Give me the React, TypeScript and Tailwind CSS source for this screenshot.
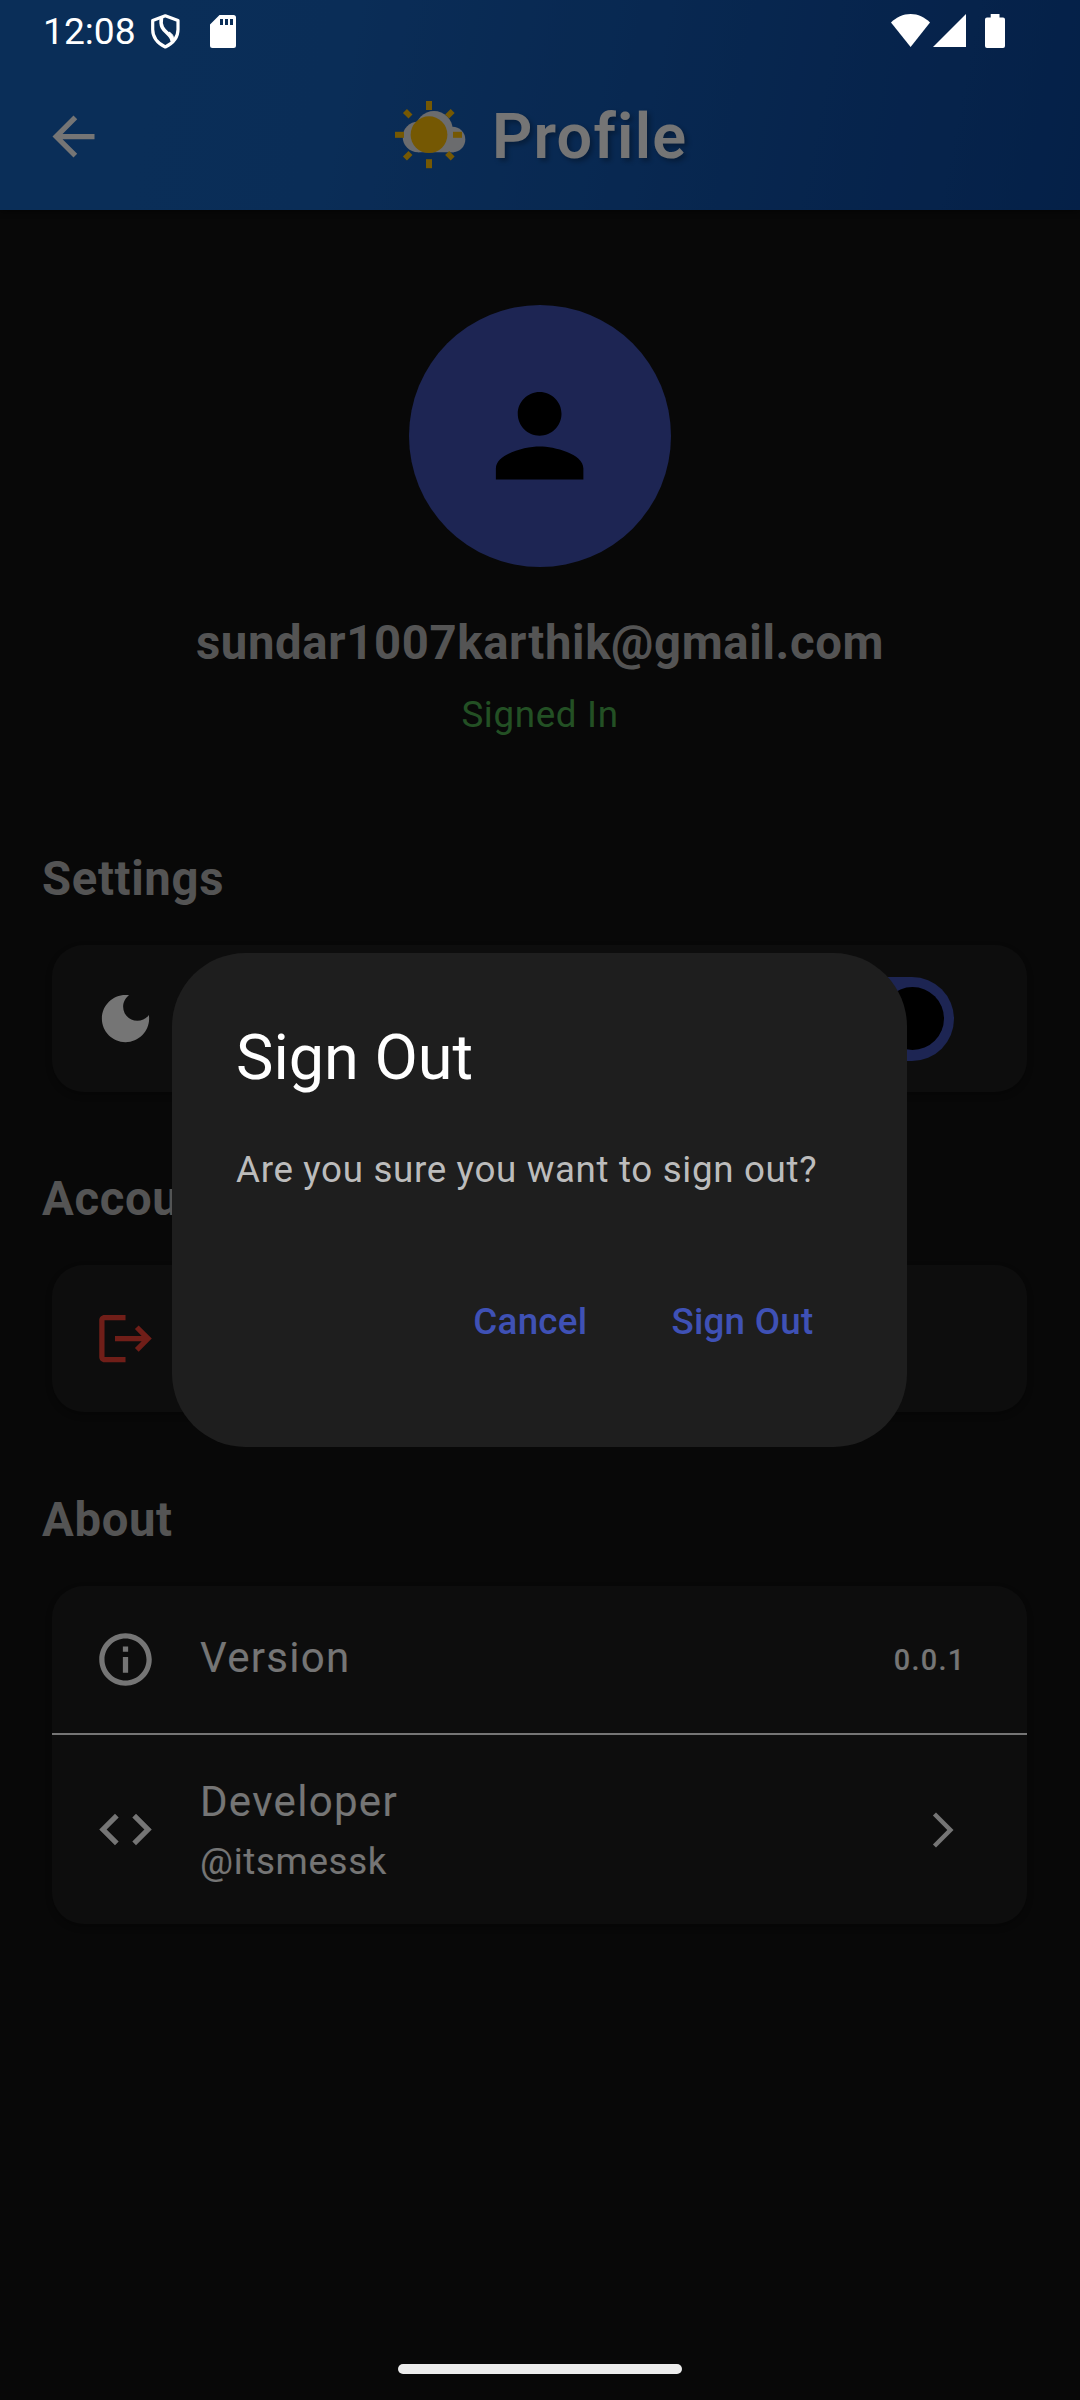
import type { ReactNode } from 'react'

const paths = {
  back: 'M20 11H7.83l5.59-5.59L12 4l-8 8 8 8 1.41-1.41L7.83 13H20v-2z',
  person: 'M12 12c2.21 0 4-1.79 4-4s-1.79-4-4-4-4 1.79-4 4 1.79 4 4 4zm0 2c-2.67 0-8 1.34-8 4v2h16v-2c0-2.66-5.33-4-8-4z',
  moon: 'M12 3c-4.97 0-9 4.03-9 9s4.03 9 9 9 9-4.03 9-9c0-.46-.04-.92-.1-1.36-.98 1.37-2.58 2.26-4.4 2.26-2.98 0-5.4-2.42-5.4-5.4 0-1.81.89-3.42 2.26-4.4-.44-.06-.9-.1-1.36-.1z',
  logout: 'M17 7l-1.41 1.41L18.17 11H8v2h10.17l-2.58 2.58L17 17l5-5zM4 5h8V3H4c-1.1 0-2 .9-2 2v14c0 1.1.9 2 2 2h8v-2H4V5z',
  info: 'M11 7h2v2h-2zm0 4h2v6h-2zm1-9C6.48 2 2 6.48 2 12s4.48 10 10 10 10-4.48 10-10S17.52 2 12 2zm0 18c-4.41 0-8-3.59-8-8s3.59-8 8-8 8 3.59 8 8-3.59 8-8 8z',
  code: 'M9.4 16.6 4.8 12l4.6-4.6L8 6l-6 6 6 6 1.4-1.4zm5.2 0 4.6-4.6-4.6-4.6L16 6l6 6-6 6-1.4-1.4z',
  forward: 'M6.23 20.23 8 22l10-10L8 2 6.23 3.77 14.46 12z',
}

function Icon({ name, className }: { name: keyof typeof paths; className: string }) {
  return (
    <svg viewBox="0 0 24 24" fill="currentColor" className={`shrink-0 ${className}`}>
      <path d={paths[name]} />
    </svg>
  )
}

function StatusBar() {
  return (
    <div className="absolute inset-x-0 top-0 z-30 flex h-[63px] items-start text-white">
      <span className="ml-[43px] mt-[9px] w-[108px] text-[37.2px] leading-[44px]">12:08</span>
      <svg width="32" height="38" viewBox="0 0 32 38" className="-ml-[2px] mt-[12px]" fill="none" stroke="currentColor" strokeWidth="3.2" strokeLinejoin="round">
        <path d="M16.3 3.8 L29 8.4 V17.5 C29 25.5 23.5 31.5 16.3 35 C9.1 31.5 3.7 25.5 3.7 17.5 V8.4 Z" />
        <path d="M12.5 5.5 C9.5 21 23 19.5 23.2 29.5" strokeWidth="3.6" />
        <path d="M20 20 C23.5 22 25 24 24.5 29 L22.5 30.5 C23 26 22.5 23 20 20 Z" fill="currentColor" strokeWidth="1" />
      </svg>
      <svg width="26" height="34" viewBox="0 0 26 34" className="ml-[29px] mt-[15px]" fill="currentColor">
        <path fillRule="evenodd" d="M9.5 0 H23.5 A2.5 2.5 0 0 1 26 2.5 V30.5 A2.5 2.5 0 0 1 23.5 33 H2.5 A2.5 2.5 0 0 1 0 30.5 V9.5 Z M10 4 V10 H13 V4 Z M15 4 V10 H18 V4 Z M20 4 V10 H23 V4 Z" />
      </svg>
      <svg width="40" height="34" viewBox="0 0 40 34" className="ml-[655px] mt-[14px]" fill="currentColor">
        <path d="M19.6 33 L0 8.6 C5.5 3 12 0 19.6 0 S33.5 3 39 8.6 Z" />
      </svg>
      <svg width="33" height="33" viewBox="0 0 33 33" className="ml-[2px] mt-[14px]" fill="currentColor">
        <path d="M33 0 V33 H0 Z" />
      </svg>
      <svg width="20" height="34" viewBox="0 0 20 34" className="ml-[19px] mt-[14px]" fill="currentColor">
        <path d="M5.7 0 H14.5 V3.4 H18 A2 2 0 0 1 20 5.4 V32 A2 2 0 0 1 18 34 H2 A2 2 0 0 1 0 32 V5.4 A2 2 0 0 1 2 3.4 H5.7 Z" />
      </svg>
    </div>
  )
}

function WeatherLogo() {
  return (
    <svg width="72" height="70" viewBox="0 0 72 70" className="mb-[2px] ml-[289px] shrink-0">
      <g fill="#e9ebef">
        <circle cx="24" cy="36" r="15.3" />
        <circle cx="40" cy="28.7" r="18.7" />
        <circle cx="58.5" cy="38.5" r="12.8" />
        <path d="M24 36 H60 V51.3 H24 Z" />
      </g>
      <g fill="#ffc107">
        <circle cx="35" cy="33.7" r="18.4" />
        <rect x="32" y="0" width="6" height="9" />
        <rect x="32" y="58.2" width="6" height="9" />
        <rect x="1" y="30.8" width="9" height="6" />
        <rect x="59" y="30.8" width="9" height="6" />
        <rect x="-3.9" y="-2.8" width="7.8" height="5.6" transform="translate(13.7 12.7) rotate(45)" />
        <rect x="-3.9" y="-2.8" width="7.8" height="5.6" transform="translate(55.9 12.7) rotate(135)" />
        <rect x="-3.9" y="-2.8" width="7.8" height="5.6" transform="translate(13.7 54.8) rotate(135)" />
        <rect x="-3.9" y="-2.8" width="7.8" height="5.6" transform="translate(55.9 54.8) rotate(45)" />
      </g>
    </svg>
  )
}

function Header() {
  return (
    <header className="relative flex h-[210px] items-center bg-[linear-gradient(101deg,#1765c0_0%,#1763be_30%,#0c479d_100%)] pl-[42px] pt-[63px] shadow-[0_2px_6px_rgba(0,0,0,0.4)]">
      <Icon name="back" className="size-[63px]" />
      <WeatherLogo />
      <h1 className="ml-[26px] text-[63px] font-semibold leading-[74px] tracking-[1.2px] [text-shadow:3px_3px_5px_rgba(0,0,0,0.3)]">Profile</h1>
    </header>
  )
}

function SectionTitle({ children, className }: { children: ReactNode; className: string }) {
  return <h2 className={`pl-[42px] text-[47.25px] font-bold leading-[56px] tracking-[0.656px] text-[#b7b7b7] ${className}`}>{children}</h2>
}

function Card({ children, className }: { children: ReactNode; className: string }) {
  return (
    <section className={`ml-[52px] mr-[53px] overflow-hidden rounded-[32px] bg-[#1e1e1e] shadow-[0_3px_6px_rgba(0,0,0,0.25)] ${className}`}>
      {children}
    </section>
  )
}

function Tile({ icon, iconColor = '', children, trailing, className }: { icon: keyof typeof paths; iconColor?: string; children?: ReactNode; trailing?: ReactNode; className: string }) {
  return (
    <div className={`flex items-center pl-[42px] pr-[62.5px] ${className}`}>
      <Icon name={icon} className={`size-[63px] ${iconColor}`} />
      <div className="ml-[43px] flex-1">{children}</div>
      {trailing}
    </div>
  )
}

function Dialog() {
  return (
    <div role="dialog" className="absolute left-[172px] top-[953px] z-20 flex h-[494px] w-[735px] flex-col rounded-[73.5px] bg-[#1e1e1e] px-[63px]">
      <h2 className="mt-[63px] pl-px text-[63px] leading-[84px]">Sign Out</h2>
      <p className="mt-[44px] pl-px text-[36.75px] leading-[52px] tracking-[0.656px] text-[#bcbcbc]">Are you sure you want to sign out?</p>
      <div className="mt-[84px] flex justify-end text-[36.75px] font-medium leading-[84px] tracking-[0.26px] text-[#3f51b5]">
        <button className="px-[31.5px]">Cancel</button>
        <button className="ml-[21px] pl-[31.5px] pr-[30.5px]">Sign Out</button>
      </div>
    </div>
  )
}

export default function App() {
  return (
    <div className="relative h-[2400px] w-[1080px] overflow-hidden bg-[#121212] font-['Roboto',sans-serif] text-white">
      <Header />
      <main className="flex flex-col">
        <div className="flex flex-col items-center">
          <div className="mt-[95px] flex size-[262px] items-center justify-center rounded-full bg-[#3f51b5] text-black">
            <Icon name="person" className="size-[131.25px]" />
          </div>
          <p className="mt-[48px] text-[47.25px] font-bold leading-[56px] tracking-[0.656px] text-[#b7b7b7]">sundar1007karthik@gmail.com</p>
          <p className="mt-[22px] text-[36.75px] leading-[44px] tracking-[0.656px] text-[#4caf50]">Signed In</p>
        </div>

        <SectionTitle className="mt-[114px]">Settings</SectionTitle>
        <Card className="mt-[38px]">
          <Tile
            icon="moon"
            className="h-[147px]"
            trailing={
              <span className="mr-[10.5px] flex h-[84px] w-[136.5px] items-center justify-end rounded-full bg-[#3f51b5] pr-[10.5px]">
                <span className="size-[63px] rounded-full bg-black" />
              </span>
            }
          />
        </Card>

        <SectionTitle className="mt-[79px]">Account</SectionTitle>
        <Card className="mt-[38px]">
          <Tile icon="logout" iconColor="text-[#f44336]" className="h-[147px]" />
        </Card>

        <SectionTitle className="mt-[80px]">About</SectionTitle>
        <Card className="mt-[38px]">
          <Tile
            icon="info"
            className="h-[147px]"
            trailing={<span className="-mr-px text-[28.875px] font-medium leading-[42px] tracking-[1.31px]">0.0.1</span>}
          >
            <p className="-mt-[4px] text-[42px] leading-[63px] tracking-[1.31px]">Version</p>
          </Tile>
          <div className="h-[2px] bg-white" />
          <Tile icon="code" className="h-[189px]" trailing={<Icon name="forward" className="mr-[0.5px] size-[42px]" />}>
            <p className="-mt-px text-[42px] leading-[63px] tracking-[1.31px]">Developer</p>
            <p className="mt-[2px] text-[36.75px] leading-[53px] tracking-[0.656px]">@itsmessk</p>
          </Tile>
        </Card>
      </main>

      <div className="absolute inset-0 z-10 bg-black/54" />
      <StatusBar />
      <Dialog />
      <div className="absolute left-[398px] top-[2364px] z-30 h-[10px] w-[284px] rounded-full bg-[#ececec]" />
    </div>
  )
}
